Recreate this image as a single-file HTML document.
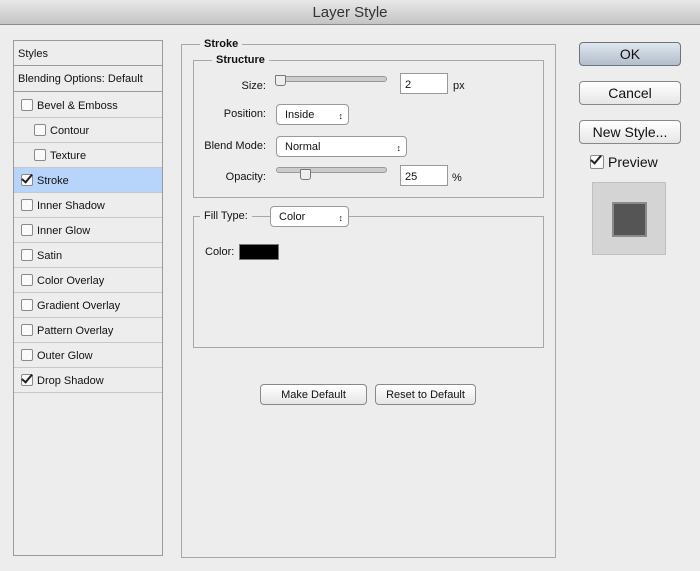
<!DOCTYPE html><html><head><style>
body{margin:0;width:700px;height:571px;background:#ededed;font-family:"Liberation Sans",sans-serif;font-size:11px;color:#111;position:relative;overflow:hidden}
.a{position:absolute}
.title{left:0;top:0;width:700px;height:24px;background:linear-gradient(#e8e8e8,#c4c4c4);border-bottom:1px solid #8a8a8a;text-align:center;font-size:15px;line-height:25px;color:#333}
.list{left:13px;top:40px;width:148px;height:514px;border:1px solid #9a9a9a;background:#ededed}
.row{position:absolute;left:0;width:148px;height:24px;border-bottom:1px solid #c8c8c8;line-height:26px}
.cb{display:inline-block;width:10px;height:10px;border:1px solid #8a8a8a;border-radius:2px;background:#fafafa;vertical-align:-2px;margin-right:4px;position:relative}
.ck::after{content:"";position:absolute;left:2px;top:-3px;width:4px;height:9px;border:solid #222;border-width:0 2px 2px 0;transform:rotate(40deg)}
.box{border:1px solid #a8a8a8}
.leg{background:#ededed;font-weight:bold;padding:0 4px;font-size:11px}
.btn{border:1px solid #888;border-radius:4px;background:linear-gradient(#fff,#e6e6e6);text-align:center;box-sizing:border-box}
.inp{background:#fff;border:1px solid #999;box-sizing:border-box;padding-left:4px;line-height:22px}
.sel{border:1px solid #999;border-radius:4px;background:#fff;box-sizing:border-box;padding-left:8px;line-height:21px}
.sel::after{content:"\2195";position:absolute;right:5px;top:1px;font-size:9px}
.track{height:4px;border:1px solid #999;border-radius:3px;background:#ccc}
.thumb{width:9px;height:9px;border:1px solid #777;background:#eee;border-radius:1px 1px 3px 3px}
.lab{text-align:right}
</style></head><body>
<div class="a title">Layer Style</div>
<div class="a list">
<div class="row" style="top:0;height:24px;border-bottom:1px solid #9a9a9a;padding-left:4px;width:144px">Styles</div>
<div class="row" style="top:25px;height:25px;border-bottom:1px solid #9a9a9a;padding-left:4px;width:144px">Blending Options: Default</div>
<div class="row" style="top:52px;padding-left:7px;width:141px"><span class="cb"></span>Bevel &amp; Emboss</div>
<div class="row" style="top:77px;padding-left:20px;width:128px"><span class="cb"></span>Contour</div>
<div class="row" style="top:102px;padding-left:20px;width:128px"><span class="cb"></span>Texture</div>
<div class="row" style="top:127px;padding-left:7px;width:141px;background:#b7d5fb"><span class="cb ck"></span>Stroke</div>
<div class="row" style="top:152px;padding-left:7px;width:141px"><span class="cb"></span>Inner Shadow</div>
<div class="row" style="top:177px;padding-left:7px;width:141px"><span class="cb"></span>Inner Glow</div>
<div class="row" style="top:202px;padding-left:7px;width:141px"><span class="cb"></span>Satin</div>
<div class="row" style="top:227px;padding-left:7px;width:141px"><span class="cb"></span>Color Overlay</div>
<div class="row" style="top:252px;padding-left:7px;width:141px"><span class="cb"></span>Gradient Overlay</div>
<div class="row" style="top:277px;padding-left:7px;width:141px"><span class="cb"></span>Pattern Overlay</div>
<div class="row" style="top:302px;padding-left:7px;width:141px"><span class="cb"></span>Outer Glow</div>
<div class="row" style="top:327px;padding-left:7px;width:141px"><span class="cb ck"></span>Drop Shadow</div>
</div>
<div class="a box" style="left:181px;top:44px;width:373px;height:512px"></div>
<div class="a leg" style="left:200px;top:38px">Stroke</div>
<div class="a box" style="left:193px;top:60px;width:349px;height:136px"></div>
<div class="a leg" style="left:212px;top:54px">Structure</div>
<div class="a lab" style="left:200px;top:80px;width:66px">Size:</div>
<div class="a track" style="left:276px;top:76px;width:109px"></div>
<div class="a thumb" style="left:275px;top:75px"></div>
<div class="a inp" style="left:400px;top:73px;width:48px;height:21px">2</div>
<div class="a" style="left:453px;top:80px">px</div>
<div class="a lab" style="left:200px;top:108px;width:66px">Position:</div>
<div class="a sel" style="left:276px;top:104px;width:73px;height:21px">Inside</div>
<div class="a lab" style="left:190px;top:140px;width:76px">Blend Mode:</div>
<div class="a sel" style="left:276px;top:136px;width:131px;height:21px">Normal</div>
<div class="a lab" style="left:200px;top:171px;width:66px">Opacity:</div>
<div class="a track" style="left:276px;top:167px;width:109px"></div>
<div class="a thumb" style="left:300px;top:169px"></div>
<div class="a inp" style="left:400px;top:165px;width:48px;height:21px">25</div>
<div class="a" style="left:452px;top:172px">%</div>
<div class="a box" style="left:193px;top:216px;width:349px;height:130px"></div>
<div class="a" style="left:200px;top:210px;background:#ededed;padding:0 4px">Fill Type:</div>
<div class="a sel" style="left:270px;top:206px;width:79px;height:21px">Color</div>
<div class="a" style="left:205px;top:246px">Color:</div>
<div class="a" style="left:239px;top:244px;width:40px;height:16px;background:#000;border:1px solid #777;box-sizing:border-box"></div>
<div class="a btn" style="left:260px;top:384px;width:107px;height:21px;line-height:20px">Make Default</div>
<div class="a btn" style="left:375px;top:384px;width:101px;height:21px;line-height:20px">Reset to Default</div>
<div class="a btn" style="left:579px;top:42px;width:102px;height:24px;line-height:22px;font-size:14px;background:linear-gradient(#dfe6ee,#b3becb);border-color:#6a7380">OK</div>
<div class="a btn" style="left:579px;top:81px;width:102px;height:24px;line-height:22px;font-size:14px">Cancel</div>
<div class="a btn" style="left:579px;top:120px;width:102px;height:24px;line-height:22px;font-size:14px">New Style...</div>
<div class="a" style="left:590px;top:154px;font-size:14px"><span class="cb ck" style="width:12px;height:12px"></span>Preview</div>
<div class="a" style="left:592px;top:182px;width:74px;height:73px;background:#d4d4d4;border:1px solid #c0c0c0;box-sizing:border-box"></div>
<div class="a" style="left:612px;top:202px;width:35px;height:35px;background:#555;border:2px solid #8a8a8a;box-sizing:border-box"></div>
</body></html>
